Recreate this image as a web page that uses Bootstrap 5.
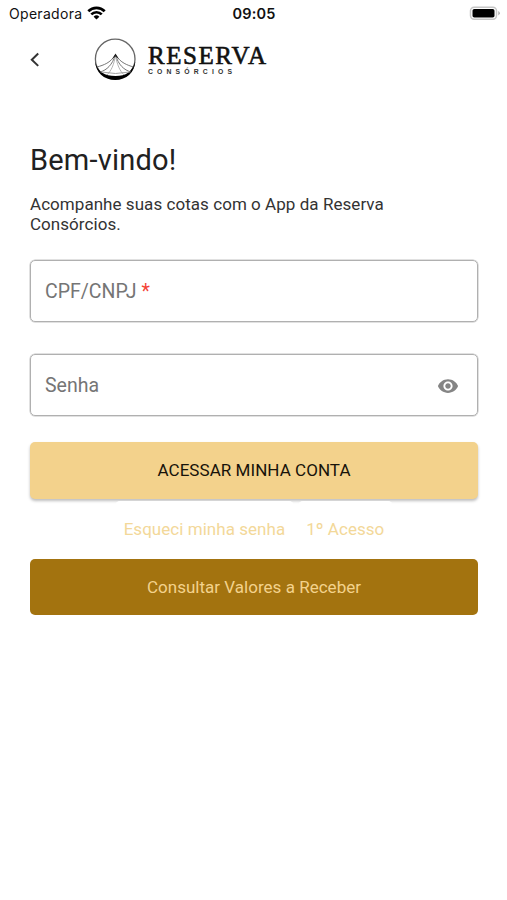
<!DOCTYPE html>
<html lang="pt-BR">
<head>
<meta charset="utf-8">
<meta name="viewport" content="width=device-width, initial-scale=1">
<title>Reserva Consórcios</title>
<link href="https://cdn.jsdelivr.net/npm/bootstrap@5.3.0/dist/css/bootstrap.min.css" rel="stylesheet">
<style>
body { font-family: Roboto, sans-serif; color: #212121; background: #fff; min-height: 900px; }
.status-bar { height: 28px; font-family: Inter, sans-serif; font-size: 14px; line-height: 28px; color: #111; padding: 0 6px 0 9px; }
.status-bar > * { flex: 1 1 0; }
.carrier { letter-spacing: .3px; }
.clock { font-weight: 600; font-size: 14.5px; letter-spacing: .2px; }
.clock span { margin-right: 2px; }
.top-bar { height: 64px; padding-left: 29px; }
.brand { margin-left: 53px; }
.login { padding: 50px 29px 0 30px; }
.welcome { font-size: 29px; line-height: 36px; letter-spacing: .2px; font-weight: 400; margin-bottom: 16px; }
.intro { font-size: 17px; line-height: 20px; letter-spacing: .05px; margin-bottom: 26px; max-width: 390px; color: #333; }
.field { height: 62px; border: 1px solid #b0b0b0; box-shadow: 0 0 0 .5px #c4c4c4; border-radius: 5px; padding: 1px 18px 0 14px; margin-bottom: 32px; font-size: 19.5px; color: #757575; }
.field + .field { margin-bottom: 26px; }
.required-mark { color: #f44336; }
.btn-enter, .btn-values { font-size: 17px; border: 0; border-radius: 5px; }
.btn-enter, .btn-enter:hover { height: 57px; background: #f3d28c; color: #17130a; box-shadow: 0 2px 3px rgba(0,0,0,.26); letter-spacing: .05px; }
.btn-values, .btn-values:hover { height: 56px; background: #a3730f; color: #f3d28c; letter-spacing: .02px; padding-top: 8px; }
.links { gap: 4px; padding-top: 2px; margin-bottom: 1px; }
.btn-text { height: 57px; border: 0; border-radius: 5px; padding: 0 8.5px; background: #fff; color: #f3d899; font-size: 17px; letter-spacing: .04px; position: relative; }
</style>
<script src="https://cdn.jsdelivr.net/npm/bootstrap@5.3.0/dist/js/bootstrap.bundle.min.js"></script>
</head>
<body>
<div class="status-bar d-flex align-items-center">
  <div class="d-flex align-items-center">
    <span class="carrier">Operadora</span>
    <svg class="ms-1" width="20" height="16" viewBox="0 0 20 16"><g fill="none" stroke="#000" stroke-width="2.7"><path d="M2.300 5.200a11.600 11.600 0 0 1 16.400 0"/><path d="M5.300 8.400a7.400 7.400 0 0 1 10.400 0"/></g><path d="M10.500 13.600 7.600 10.800a4.100 4.100 0 0 1 5.800 0Z"/></svg>
  </div>
  <div class="clock text-center"><span>09:05</span></div>
  <div class="d-flex justify-content-end align-items-center">
    <svg width="32" height="16" viewBox="0 0 32 16"><rect x="1.500" y="1.200" width="26" height="12" rx="3.600" fill="#fff" stroke="#c6c6c6" stroke-width="1.500"/><rect x="3.500" y="2.900" width="22" height="8.600" rx="1.800"/><path d="M29.300 5q3 2.200 0 4.400Z" fill="#aaa"/></svg>
  </div>
</div>
<header class="top-bar d-flex align-items-center">
  <svg width="12" height="16" viewBox="0 0 12 16"><path d="m9.200 1.500-6.400 6.200 6.400 6.200" fill="none" stroke="#333" stroke-width="2"/></svg>
  <svg class="brand" width="176" height="44" viewBox="0 0 176 44">
    <circle cx="21.200" cy="21" r="19.800" fill="#fff" stroke="#666" stroke-width="1.300"/>
    <path d="M1.200 23.500C3.500 34 11 38 21.500 38S38 34 41.200 23.500C41 34 32.500 42 21.200 42S1.400 34 1.200 23.500Z" fill="#000"/>
    <g fill="none" stroke="#666" stroke-width=".9"><path d="M21.500 17C16 25 10 27 3 29"/><path d="M21.500 17C18 27 13 32 6 34"/><path d="M21.500 17C27 25 33 27 39.500 29"/><path d="M21.500 17C24.500 27 30 32 37 34"/><path d="M21.500 17C20 27 17 33 13 37M21.500 17C23 27 26 33 30 37" stroke="#aaa"/><path d="M7 34q14.500 3 29 0" stroke="#999"/></g>
    <path d="m21.500 15.500 3.500 5.500-3.500-2.500-3.500 2.500Z" fill="#222"/>
    <text x="54" y="25.600" font-family="Liberation Serif, serif" font-size="25" textLength="118" lengthAdjust="spacing" fill="#111" stroke="#111" stroke-width=".6">RESERVA</text>
    <text x="54" y="36" font-family="Liberation Sans, sans-serif" font-weight="700" font-size="6.800" textLength="84" fill="#333">CONSÓRCIOS</text>
  </svg>
</header>
<main class="login">
  <h1 class="welcome">Bem-vindo!</h1>
  <p class="intro">Acompanhe suas cotas com o App da Reserva Consórcios.</p>
  <div class="field d-flex align-items-center"><span>CPF/CNPJ <span class="required-mark">*</span></span></div>
  <div class="field d-flex align-items-center justify-content-between"><span>Senha</span>
    <svg width="22" height="22" viewBox="0 0 24 24" fill="#858585"><path d="M12 4.500C7 4.500 2.730 7.610 1 12c1.730 4.390 6 7.500 11 7.500s9.270-3.110 11-7.500c-1.730-4.390-6-7.500-11-7.500zM12 17c-2.760 0-5-2.240-5-5s2.240-5 5-5 5 2.240 5 5-2.240 5-5 5zm0-8c-1.660 0-3 1.340-3 3s1.340 3 3 3 3-1.340 3-3-1.340-3-3-3z"/></svg>
  </div>
  <button class="btn btn-enter w-100 d-block">ACESSAR MINHA CONTA</button>
  <div class="links d-flex justify-content-center">
    <button class="btn btn-text">Esqueci minha senha</button>
    <button class="btn btn-text">1º Acesso</button>
  </div>
  <button class="btn btn-values w-100 d-block">Consultar Valores a Receber</button>
</main>
</body>
</html>
